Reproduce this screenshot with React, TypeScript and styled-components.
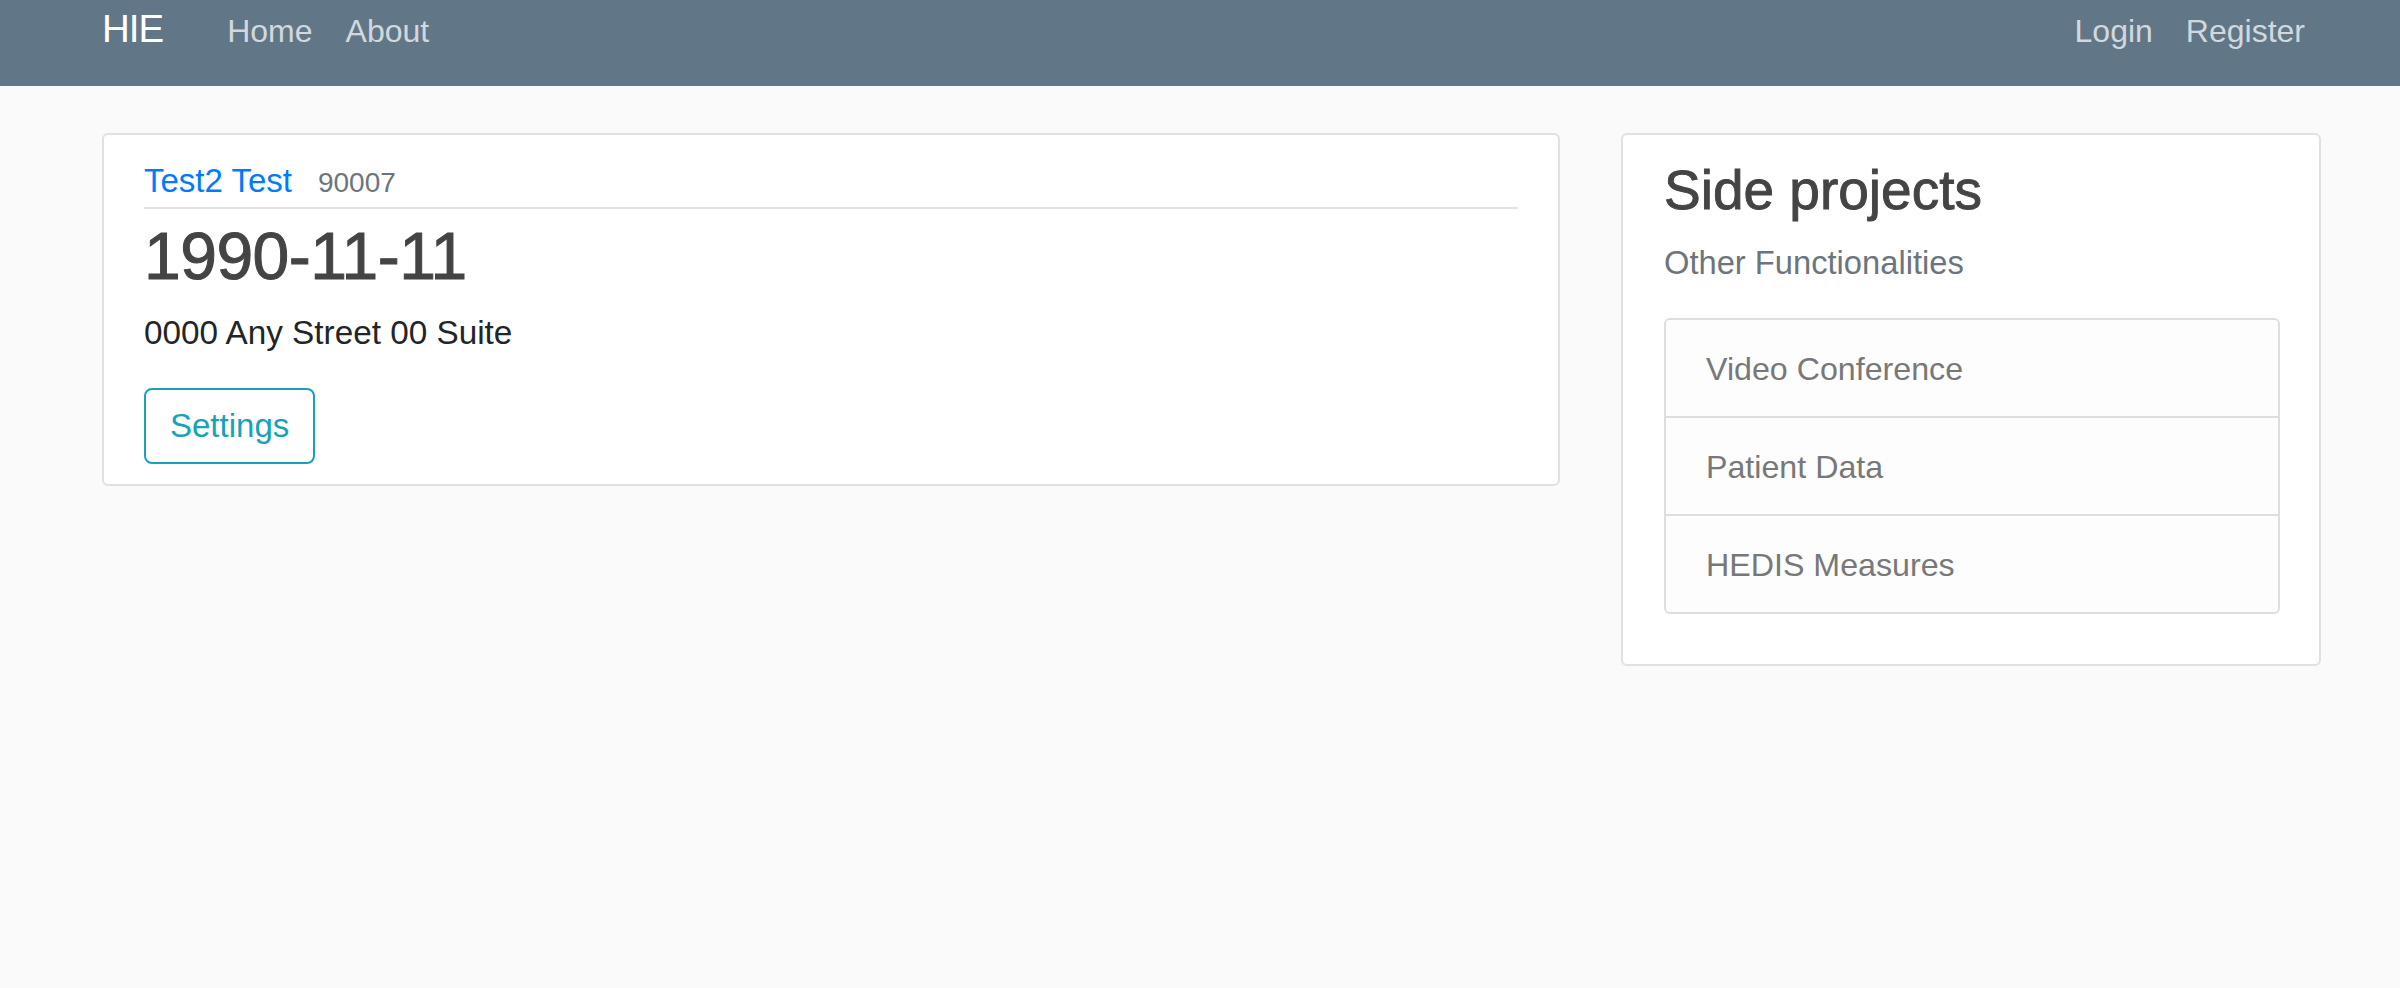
import { ReactElement } from 'react';
import styled, { createGlobalStyle } from 'styled-components';

const GlobalStyle = createGlobalStyle`
  html, body {
    margin: 0;
    padding: 0;
    background: #fafafa;
    font-family: "Liberation Sans", Arial, sans-serif;
    color: #212529;
  }
  * {
    box-sizing: border-box;
  }
`;

const Navbar = styled.nav`
  height: 86px;
  background: #617788;
  display: flex;
  align-items: baseline;
  padding: 10px 95px 0 102px;
`;

const Brand = styled.a`
  font-size: 38.5px;
  line-height: 1;
  letter-spacing: -1px;
  color: #ffffff;
  text-decoration: none;
  margin-right: 64px;
`;

const NavGroup = styled.div<{ $right?: boolean }>`
  display: flex;
  align-items: baseline;
  gap: 33px;
  margin-left: ${props => (props.$right ? 'auto' : '0')};
`;

const NavLink = styled.a`
  font-size: 32px;
  line-height: 1;
  color: rgba(255, 255, 255, 0.72);
  text-decoration: none;
  cursor: pointer;
`;

const Main = styled.main`
  display: grid;
  grid-template-columns: 1fr 700px;
  gap: 61px;
  align-items: start;
  padding: 47px 79px 0 102px;
`;

const Card = styled.section<{ $side?: boolean }>`
  background: #ffffff;
  border: 2px solid #e1e1e1;
  border-radius: 6px;
  padding: ${props => (props.$side ? '22px 39px 50px 41px' : '27px 40px 20px 40px')};
`;

const ProfileHeader = styled.div`
  display: flex;
  align-items: baseline;
  gap: 26px;
  padding-bottom: 7px;
  border-bottom: 2px solid #e2e2e2;
`;

const Name = styled.a`
  font-size: 33px;
  line-height: 1.15;
  color: #007bff;
  text-decoration: none;
`;

const Zip = styled.span`
  font-size: 28px;
  line-height: 1.2;
  color: #6c757d;
`;

const BirthDate = styled.h1`
  margin: 8px 0 0;
  font-size: 66px;
  line-height: 1.2;
  font-weight: 500;
  letter-spacing: -0.5px;
  color: #444444;
  -webkit-text-stroke: 1px #444444;
`;

const Address = styled.p`
  margin: 12px 0 0;
  font-size: 33.3px;
  line-height: 1.5;
  color: #212529;
`;

const OutlineButton = styled.button`
  margin-top: 30px;
  height: 76px;
  padding: 0 24px;
  font-family: inherit;
  font-size: 33px;
  line-height: 72px;
  color: #17a2b8;
  background: transparent;
  border: 2px solid #17a2b8;
  border-radius: 8px;
  cursor: pointer;
`;

const SideTitle = styled.h2`
  margin: 0;
  font-size: 55px;
  line-height: 1.2;
  font-weight: 500;
  color: #444444;
  -webkit-text-stroke: 0.9px #444444;
`;

const SideSubtitle = styled.p`
  margin: 15px 0 0;
  font-size: 32.7px;
  line-height: 1.5;
  color: #6c757d;
`;

const ListGroup = styled.ul`
  list-style: none;
  margin: 31px 0 0;
  padding: 0;
  border: 2px solid #dedede;
  border-radius: 6px;
  overflow: hidden;
`;

const ListItem = styled.li`
  height: 96px;
  padding: 25px 40px 0;
  font-size: 32.2px;
  line-height: 1.5;
  color: #787878;
  background: #fdfdfd;
  cursor: pointer;

  & + & {
    height: 98px;
    border-top: 2px solid #dedede;
  }
`;

const projects = ['Video Conference', 'Patient Data', 'HEDIS Measures'];

function App(): ReactElement {
  return (
    <>
      <GlobalStyle />
      <Navbar>
        <Brand>HIE</Brand>
        <NavGroup>
          <NavLink>Home</NavLink>
          <NavLink>About</NavLink>
        </NavGroup>
        <NavGroup $right>
          <NavLink>Login</NavLink>
          <NavLink>Register</NavLink>
        </NavGroup>
      </Navbar>
      <Main>
        <Card>
          <ProfileHeader>
            <Name>Test2 Test</Name>
            <Zip>90007</Zip>
          </ProfileHeader>
          <BirthDate>1990-11-11</BirthDate>
          <Address>0000 Any Street 00 Suite</Address>
          <OutlineButton type="button">Settings</OutlineButton>
        </Card>
        <Card $side>
          <SideTitle>Side projects</SideTitle>
          <SideSubtitle>Other Functionalities</SideSubtitle>
          <ListGroup>
            {projects.map(item => (
              <ListItem key={item}>{item}</ListItem>
            ))}
          </ListGroup>
        </Card>
      </Main>
    </>
  );
}

export default App;
